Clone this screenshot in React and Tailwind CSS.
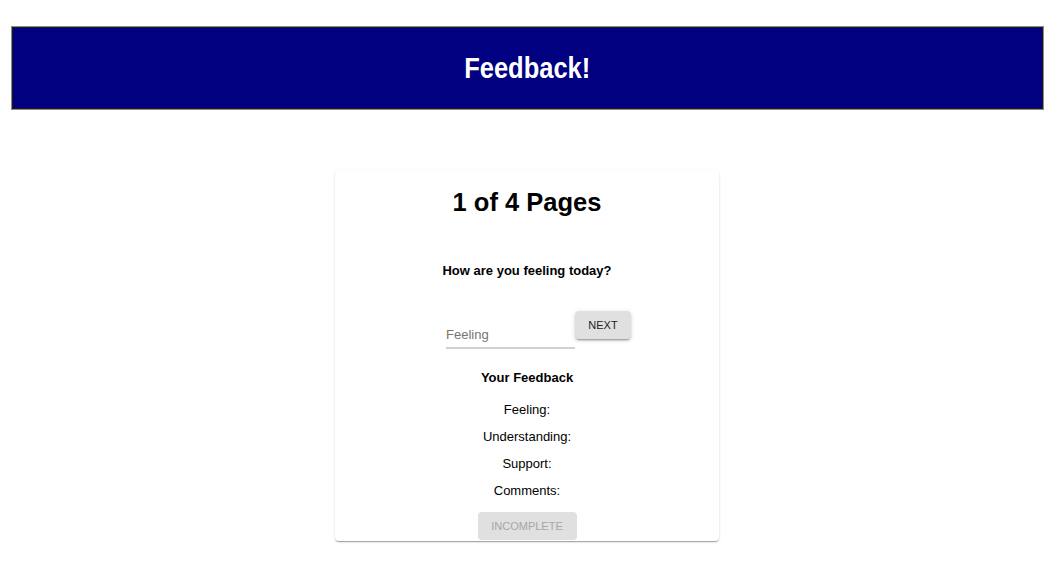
export default function App() {
  const font = { fontFamily: '"Liberation Sans", Arial, sans-serif' };
  return (
    <div className="min-h-[564px] bg-white text-black" style={font}>
      <div className="pt-[27px]">
        <header className="ml-[12px] mr-[13px] h-[82px] bg-[#000080] border border-[#1a1a1a] shadow-[0_0_0_1px_#8a8a8a] flex items-center justify-center">
          <h1 className="inline-block text-[30px] font-bold text-white leading-none scale-x-[0.85]">
            Feedback!
          </h1>
        </header>
      </div>

      <div className="mt-[61px] flex justify-center pr-[2px]">
        <div className="w-[384px] h-[371px] bg-white rounded-[4px] shadow-[0_2px_1px_-1px_rgba(0,0,0,0.2),0_1px_1px_0_rgba(0,0,0,0.14),0_1px_3px_0_rgba(0,0,0,0.12)] flex flex-col items-center">
          <h2 className="mt-[17px] text-[25.5px] leading-[30px] font-bold">1 of 4 Pages</h2>

          <p className="mt-[46px] text-[13px] leading-[16px] font-bold">How are you feeling today?</p>

          <div className="mt-[32px] flex items-start pl-[23px]">
            <div className="pt-[14px]">
              <input
                placeholder="Feeling"
                className="block w-[129px] h-[24px] pb-[3px] border-b-2 border-[#d0d0d0] text-[13px] text-[#333] placeholder:text-[#757575] outline-none bg-transparent"
                style={font}
              />
            </div>
            <button className="w-[56px] h-[28px] rounded-[4px] bg-[#e0e0e0] text-[11px] text-[#222] shadow-[0_3px_1px_-2px_rgba(0,0,0,0.2),0_2px_2px_0_rgba(0,0,0,0.14),0_1px_5px_0_rgba(0,0,0,0.12)]">
              NEXT
            </button>
          </div>

          <h3 className="mt-[21px] text-[13px] leading-[16px] font-bold">Your Feedback</h3>

          <div className="mt-[10px] flex flex-col items-center text-[13px]">
            <div className="h-[27px] leading-[27px]">Feeling:</div>
            <div className="h-[27px] leading-[27px]">Understanding:</div>
            <div className="h-[27px] leading-[27px]">Support:</div>
            <div className="h-[27px] leading-[27px]">Comments:</div>
          </div>

          <button
            disabled
            className="mt-[8px] w-[99px] h-[28px] rounded-[4px] bg-[#e0e0e0] text-[11px] text-[#a6a6a6]"
          >
            INCOMPLETE
          </button>
        </div>
      </div>
    </div>
  );
}
